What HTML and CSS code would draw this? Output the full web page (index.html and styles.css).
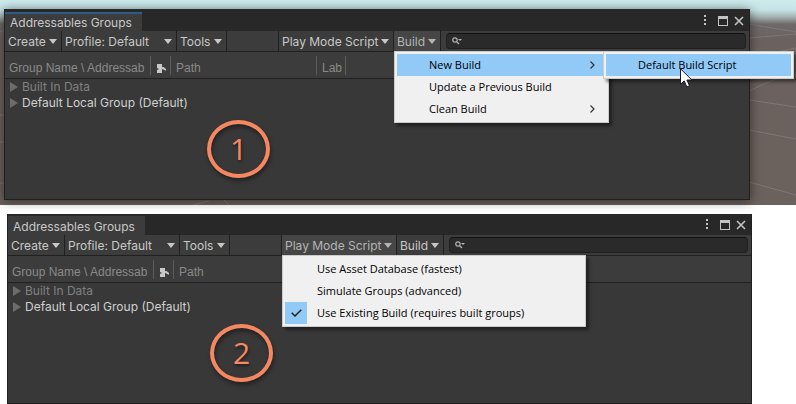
FILE: index.html
```html
<!DOCTYPE html>
<html lang="en">
<head>
<meta charset="utf-8">
<title>Addressables Groups</title>
<link rel="stylesheet" href="styles.css">
</head>
<body>
<svg class="defs" aria-hidden="true">
  <symbol id="caret" viewBox="0 0 8 5"><path d="M0 0h8L4 5z" fill="currentColor"/></symbol>
  <symbol id="fold" viewBox="0 0 8 10"><path d="M0 0l8 5-8 5z" fill="#6c6c6c"/></symbol>
  <symbol id="dots" viewBox="0 0 3 11"><path d="M0 0h2v2H0zM0 4h2v2H0zM0 8h2v2H0z" fill="#c4c4c4"/></symbol>
  <symbol id="maximize" viewBox="0 0 10 10"><path d="M0 0h10v10H0zM1 3v6h8V3z" fill="#c4c4c4" fill-rule="evenodd"/></symbol>
  <symbol id="close" viewBox="0 0 10 10"><path d="M1 1l8 8M9 1l-8 8" stroke="#c4c4c4" stroke-width="1.6"/></symbol>
  <symbol id="search" viewBox="0 0 10 8"><circle cx="3" cy="3" r="2.2" fill="none" stroke="#b4b4b4" stroke-width="1.2"/><path d="M4.6 4.6L7 7" stroke="#b4b4b4" stroke-width="1.3"/><path d="M6 2h4L8 4z" fill="#b4b4b4"/></symbol>
  <symbol id="asset" viewBox="0 0 9 9"><path d="M0 0h5v3h1.500L9 5v1.500H8L6 5.200 5 5v4H0V6l2-1-2-1z" fill="#c8c8c8"/></symbol>
  <symbol id="chevron" viewBox="0 0 5 8"><path d="M.5 .5L4 4 .5 7.500" fill="none" stroke="#333" stroke-width="1.2"/></symbol>
  <symbol id="check" viewBox="0 0 11 8"><path d="M.7 3.800L4 7l6.300-6.300" fill="none" stroke="#222" stroke-width="1.5"/></symbol>
</svg>

<section class="scene">
  <svg class="grid-lines" aria-hidden="true">
    <path d="M749 24l47 8M749 38l47-4M749 58l47-10M749 91l24-11 23-6M749 100l47 7M749 130l47 9M749 182l47 13M0 32l4-2M0 115h4M0 142h4M0 183h4M193 205l16-4M224 200l5 5"/>
  </svg>
  <div class="window focused">
    <header class="titlebar">
      <h2 class="tab">Addressables Groups</h2>
      <div class="controls">
        <button aria-label="Options"><svg width="3" height="11"><use href="#dots"/></svg></button>
        <button aria-label="Maximize"><svg width="10" height="10"><use href="#maximize"/></svg></button>
        <button aria-label="Close"><svg width="10" height="10"><use href="#close"/></svg></button>
      </div>
    </header>
    <div class="toolbar">
      <button class="tool create">Create<svg width="8" height="5"><use href="#caret"/></svg></button>
      <button class="tool profile">Profile: Default<svg width="8" height="5"><use href="#caret"/></svg></button>
      <button class="tool tools">Tools<svg width="8" height="5"><use href="#caret"/></svg></button>
      <button class="tool play">Play Mode Script<svg width="8" height="5"><use href="#caret"/></svg></button>
      <div class="dropdown">
        <button class="tool build open">Build<svg width="8" height="5"><use href="#caret"/></svg></button>
        <ul class="menu build-menu">
          <li class="selected"><button>New Build<svg width="5" height="8"><use href="#chevron"/></svg></button>
            <ul class="menu submenu">
              <li class="selected"><button>Default Build Script</button>
                <svg class="cursor" width="13" height="20" viewBox="0 0 13 20"><path d="M.5 .8v15.500l3.700-3.400 2.600 6 2.700-1.200-2.600-5.700h5z" fill="#fff" stroke="#171a2b"/></svg>
              </li>
            </ul>
          </li>
          <li><button>Update a Previous Build</button></li>
          <li><button>Clean Build<svg width="5" height="8"><use href="#chevron"/></svg></button></li>
        </ul>
      </div>
      <label class="search"><svg width="10" height="8"><use href="#search"/></svg><input type="text" aria-label="Search"></label>
    </div>
    <table class="groups">
      <colgroup><col class="c-name"><col class="c-icon"><col class="c-path"><col class="c-label"><col></colgroup>
      <thead><tr>
        <th><span>Group Name \ Addressab</span></th>
        <th class="icon"><span><svg width="9" height="9"><use href="#asset"/></svg></span></th>
        <th><span>Path</span></th>
        <th><span>Lab</span></th>
        <th></th>
      </tr></thead>
      <tbody>
        <tr class="dim"><td colspan="5"><svg width="8" height="10"><use href="#fold"/></svg>Built In Data</td></tr>
        <tr><td colspan="5"><svg width="8" height="10"><use href="#fold"/></svg>Default Local Group (Default)</td></tr>
      </tbody>
    </table>
    <div class="badge">1</div>
  </div>
</section>

<section class="plain">
  <div class="window">
    <header class="titlebar">
      <h2 class="tab">Addressables Groups</h2>
      <div class="controls">
        <button aria-label="Options"><svg width="3" height="11"><use href="#dots"/></svg></button>
        <button aria-label="Maximize"><svg width="10" height="10"><use href="#maximize"/></svg></button>
        <button aria-label="Close"><svg width="10" height="10"><use href="#close"/></svg></button>
      </div>
    </header>
    <div class="toolbar">
      <button class="tool create">Create<svg width="8" height="5"><use href="#caret"/></svg></button>
      <button class="tool profile">Profile: Default<svg width="8" height="5"><use href="#caret"/></svg></button>
      <button class="tool tools">Tools<svg width="8" height="5"><use href="#caret"/></svg></button>
      <div class="dropdown play-slot">
        <button class="tool play open">Play Mode Script<svg width="8" height="5"><use href="#caret"/></svg></button>
        <ul class="menu play-menu">
          <li><button>Use Asset Database (fastest)</button></li>
          <li><button>Simulate Groups (advanced)</button></li>
          <li><button><span class="tick"><svg width="11" height="8"><use href="#check"/></svg></span>Use Existing Build (requires built groups)</button></li>
        </ul>
      </div>
      <button class="tool build">Build<svg width="8" height="5"><use href="#caret"/></svg></button>
      <label class="search"><svg width="10" height="8"><use href="#search"/></svg><input type="text" aria-label="Search"></label>
    </div>
    <table class="groups">
      <colgroup><col class="c-name"><col class="c-icon"><col class="c-path"><col class="c-label"><col></colgroup>
      <thead><tr>
        <th><span>Group Name \ Addressab</span></th>
        <th class="icon"><span><svg width="9" height="9"><use href="#asset"/></svg></span></th>
        <th><span>Path</span></th>
        <th></th>
        <th></th>
      </tr></thead>
      <tbody>
        <tr class="dim"><td colspan="5"><svg width="8" height="10"><use href="#fold"/></svg>Built In Data</td></tr>
        <tr><td colspan="5"><svg width="8" height="10"><use href="#fold"/></svg>Default Local Group (Default)</td></tr>
      </tbody>
    </table>
    <div class="badge">2</div>
  </div>
</section>
</body>
</html>
```
FILE: styles.css
```css
* { box-sizing: border-box; }
body {
  margin: 0;
  min-height: 100vh;
  display: flex;
  flex-direction: column;
  background: #fff;
  font: 12px/16px Inter, "Liberation Sans", sans-serif;
  color: #c8c8c8;
}
.defs { position: absolute; width: 0; height: 0; }
button {
  margin: 0;
  padding: 0;
  border: 0;
  background: none;
  font: inherit;
  color: inherit;
  text-align: left;
  white-space: nowrap;
}
ul { list-style: none; margin: 0; padding: 0; }

.scene {
  position: relative;
  padding: 9px 46px 5px 4px;
  background: linear-gradient(#cdecee 0, #c6e2e4 10px, #a4b2b2 17px, #6e6a69 24px, #6b625f 40px, #6b615d 100%);
}
.grid-lines { position: absolute; inset: 0; width: 100%; height: 100%; }
.grid-lines path { fill: none; stroke: #7d7775; stroke-width: 1; }
.plain { flex: 1; display: flex; padding: 9px 44px 0 7px; }
.plain .window { flex: 1; border-top: 0; }

.window {
  position: relative;
  background: #383838;
  border: 1px solid #202020;
  border-top-color: #282828;
}
.focused { min-height: 191px; box-shadow: 0 1px 10px rgba(0, 0, 0, .5); }

.titlebar { display: flex; justify-content: space-between; height: 21px; background: #282828; }
.tab {
  margin: 2px 0 0;
  padding: 3px 14px 0 5px;
  width: 137px;
  background: #3c3c3c;
  font: inherit;
  white-space: nowrap;
}
.focused .tab { border-top: 2px solid #2c5d87; padding-top: 1px; }
.controls { display: flex; align-items: center; gap: 6px; padding-right: 5px; }
.controls button { display: flex; justify-content: center; width: 10px; }
.controls button:first-child { margin-right: 2px; }

.toolbar {
  display: flex;
  height: 21px;
  background: #3c3c3c;
  border-bottom: 1px solid #202020;
}
.tool {
  display: flex;
  align-items: center;
  justify-content: space-between;
  height: 20px;
  padding: 1px 4px 0 3px;
  border-right: 1px solid #202020;
}
.create { width: 57px; }
.profile { width: 115px; }
.tools { width: 50px; }
.play { width: 116px; border-left: 1px solid #202020; }
.tools + .play, .play-slot { margin-left: 51px; }
.build { width: 47px; }
.open { background: #464646; color: #b4b4b4; }
.dropdown { position: relative; }
.search {
  flex: 1;
  display: flex;
  align-items: center;
  gap: 4px;
  margin: 2px 3px 2px 5px;
  padding-left: 5px;
  border: 1px solid #202020;
  border-top-color: #121212;
  border-radius: 4px;
  background: #2a2a2a;
}
.search input {
  flex: 1;
  min-width: 0;
  height: 14px;
  padding: 0;
  border: 0;
  outline: 0;
  background: none;
  font: inherit;
  color: inherit;
}

.groups { width: 100%; table-layout: fixed; border-collapse: separate; border-spacing: 0; }
.c-name { width: 146px; }
.c-icon { width: 20px; }
.c-path { width: 146px; }
.c-label { width: 29px; }
.groups th {
  height: 27px;
  padding: 0;
  background: #3c3c3c;
  border-bottom: 1px solid #202020;
  font: 12px/15px "Liberation Sans", Arial, sans-serif;
  text-align: left;
  color: #8a8a8a;
}
.groups th span {
  display: block;
  height: 19px;
  padding: 5px 0 0 5px;
  border-right: 1px solid #5c5c5c;
  white-space: nowrap;
}
.groups th:first-child span { padding-left: 4px; }
.groups th.icon span { padding: 8px 0 0 6px; }
.groups th svg { display: block; }
.groups td { height: 16px; padding: 0 0 0 5px; color: #d0d0d0; }
.groups td svg { margin-right: 4px; vertical-align: -1px; }
.groups .dim td { color: #808080; }

.menu {
  position: absolute;
  z-index: 1;
  padding: 2px;
  border: 1px solid #ccc;
  background: #f0f0f0;
  box-shadow: 3px 3px 3px rgba(0, 0, 0, .45);
  font: 11px/22px "Open Sans", "Noto Sans", sans-serif;
  color: #000;
}
.menu li { position: relative; }
.menu li > button {
  display: flex;
  align-items: center;
  justify-content: space-between;
  width: 100%;
  height: 22px;
  padding: 0 11px 0 32px;
}
.menu .selected > button { background: #91c9f7; }
.build-menu { top: 20px; left: 0; width: 215px; }
.submenu { top: -3px; left: 206px; width: 191px; }
.play-menu { top: 20px; left: 1px; width: 304px; }
.tick {
  position: absolute;
  left: 0;
  display: flex;
  align-items: center;
  justify-content: center;
  width: 22px;
  height: 22px;
  background: #91c9f7;
}
.cursor { position: absolute; left: 74px; top: 14px; }

.badge {
  position: absolute;
  left: 202px;
  top: 110px;
  width: 63px;
  height: 58px;
  border: 4px solid #f58761;
  border-radius: 50%;
  color: #f58761;
  font: 30px/50px "Open Sans", sans-serif;
  text-align: center;
  text-shadow: 1px 2px 3px rgba(0, 0, 0, .5);
  box-shadow: 1px 3px 4px rgba(0, 0, 0, .4), inset 1px 3px 4px rgba(0, 0, 0, .4);
}
```
